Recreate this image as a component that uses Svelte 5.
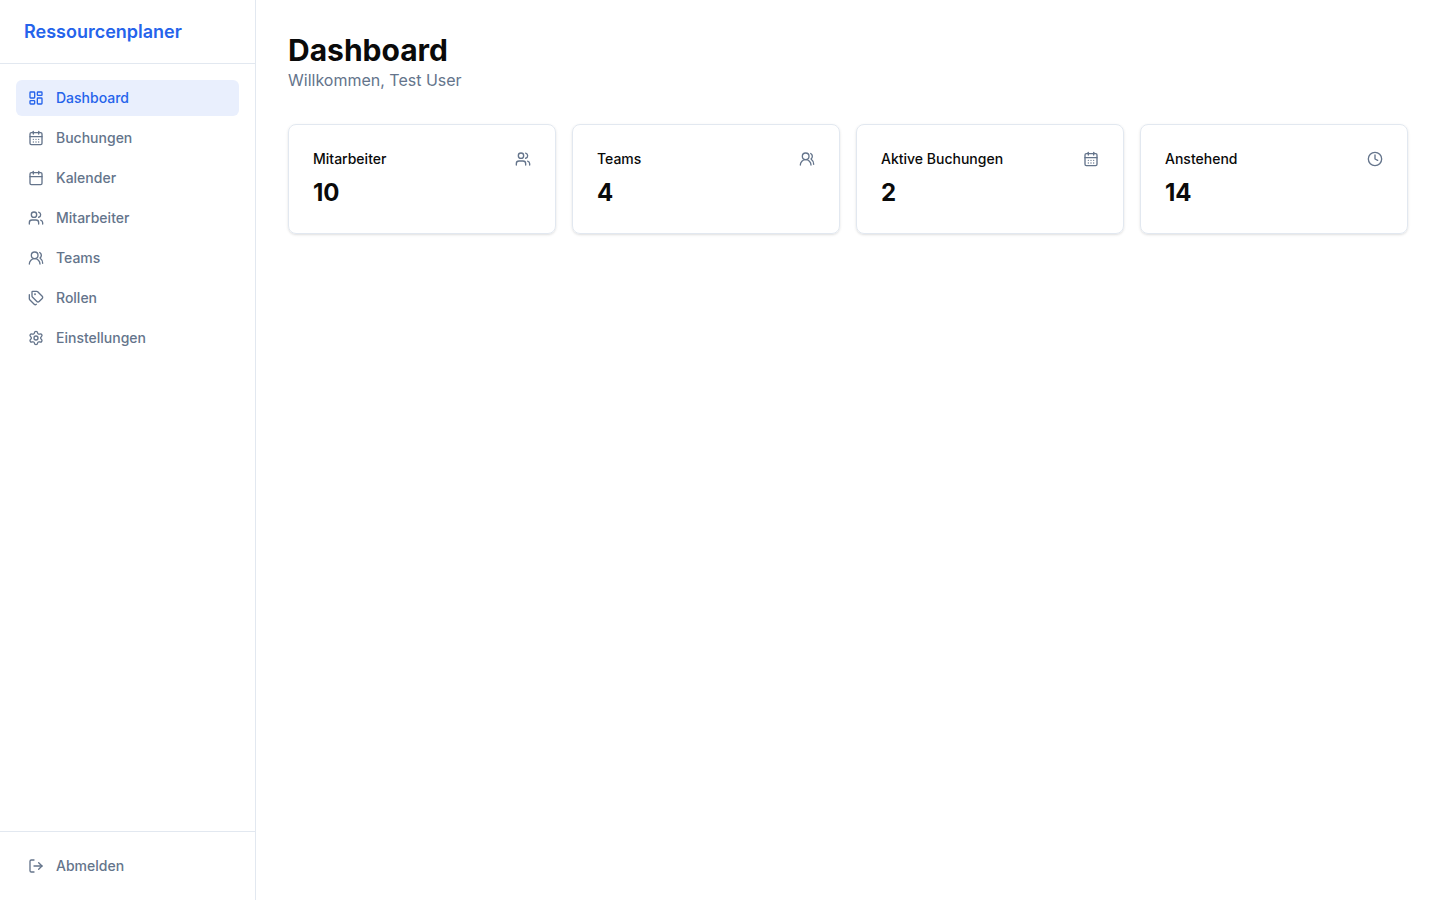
<script>
  const icons = {
    dashboard: `<rect width="7" height="9" x="3" y="3" rx="1"/><rect width="7" height="5" x="14" y="3" rx="1"/><rect width="7" height="9" x="14" y="12" rx="1"/><rect width="7" height="5" x="3" y="16" rx="1"/>`,
    calendarDays: `<path d="M8 2v4"/><path d="M16 2v4"/><rect width="18" height="18" x="3" y="4" rx="2"/><path d="M3 10h18"/><path d="M8 14h.01"/><path d="M12 14h.01"/><path d="M16 14h.01"/><path d="M8 18h.01"/><path d="M12 18h.01"/><path d="M16 18h.01"/>`,
    calendar: `<path d="M8 2v4"/><path d="M16 2v4"/><rect width="18" height="18" x="3" y="4" rx="2"/><path d="M3 10h18"/>`,
    users: `<path d="M16 21v-2a4 4 0 0 0-4-4H6a4 4 0 0 0-4 4v2"/><circle cx="9" cy="7" r="4"/><path d="M22 21v-2a4 4 0 0 0-3-3.87"/><path d="M16 3.128a4 4 0 0 1 0 7.744"/>`,
    usersRound: `<path d="M18 21a8 8 0 0 0-16 0"/><circle cx="10" cy="8" r="5"/><path d="M22 20c0-3.37-2-6.5-4-8a5 5 0 0 0-.45-8.3"/>`,
    tags: `<path d="M13.172 2a2 2 0 0 1 1.414.586l6.71 6.71a2.4 2.4 0 0 1 0 3.408l-4.592 4.592a2.4 2.4 0 0 1-3.408 0l-6.71-6.71A2 2 0 0 1 6 9.172V3a1 1 0 0 1 1-1z"/><path d="M2 7v6.172a2 2 0 0 0 .586 1.414l6.71 6.71a2.4 2.4 0 0 0 3.191.193"/><circle cx="10.5" cy="6.5" r=".5" fill="currentColor"/>`,
    settings: `<path d="M9.671 4.136a2.34 2.34 0 0 1 4.659 0 2.34 2.34 0 0 0 3.319 1.915 2.34 2.34 0 0 1 2.33 4.033 2.34 2.34 0 0 0 0 3.831 2.34 2.34 0 0 1-2.33 4.033 2.34 2.34 0 0 0-3.319 1.915 2.34 2.34 0 0 1-4.659 0 2.34 2.34 0 0 0-3.32-1.915 2.34 2.34 0 0 1-2.33-4.033 2.34 2.34 0 0 0 0-3.831A2.34 2.34 0 0 1 6.35 6.051a2.34 2.34 0 0 0 3.319-1.915"/><circle cx="12" cy="12" r="3"/>`,
    clock: `<circle cx="12" cy="12" r="10"/><path d="M12 6v6l4 2"/>`,
    logout: `<path d="M9 21H5a2 2 0 0 1-2-2V5a2 2 0 0 1 2-2h4"/><path d="m16 17 5-5-5-5"/><path d="M21 12H9"/>`,
  };

  const navItems = [
    { label: "Dashboard", href: "#dashboard", icon: "dashboard" },
    { label: "Buchungen", href: "#buchungen", icon: "calendarDays" },
    { label: "Kalender", href: "#kalender", icon: "calendar" },
    { label: "Mitarbeiter", href: "#mitarbeiter", icon: "users" },
    { label: "Teams", href: "#teams", icon: "usersRound" },
    { label: "Rollen", href: "#rollen", icon: "tags" },
    { label: "Einstellungen", href: "#einstellungen", icon: "settings" },
  ];

  const stats = [
    { title: "Mitarbeiter", value: 10, icon: "users" },
    { title: "Teams", value: 4, icon: "usersRound" },
    { title: "Aktive Buchungen", value: 2, icon: "calendarDays" },
    { title: "Anstehend", value: 14, icon: "clock" },
  ];

  const user = "Test User";
  let active = $state("#dashboard");
</script>

{#snippet icon(name)}
  <svg class="icon" viewBox="0 0 24 24" aria-hidden="true">
    {@html icons[name]}
  </svg>
{/snippet}

<div class="layout">
  <aside class="sidebar">
    <div class="brand">Ressourcenplaner</div>
    <nav>
      {#each navItems as item}
        <a
          href={item.href}
          class="nav-link"
          class:active={active === item.href}
          onclick={() => (active = item.href)}
        >
          {@render icon(item.icon)}
          {item.label}
        </a>
      {/each}
    </nav>
    <div class="sidebar-footer">
      <button class="nav-link" type="button">
        {@render icon("logout")}
        Abmelden
      </button>
    </div>
  </aside>

  <main>
    <h1>Dashboard</h1>
    <p class="welcome">Willkommen, {user}</p>
    <div class="stats">
      {#each stats as stat}
        <section class="card">
          <div class="card-header">
            <h2>{stat.title}</h2>
            {@render icon(stat.icon)}
          </div>
          <div class="value">{stat.value}</div>
        </section>
      {/each}
    </div>
  </main>
</div>

<style>
  :global(body) {
    margin: 0;
    background: #ffffff;
    color: #0a0a0a;
    font-family: Inter, "Liberation Sans", sans-serif;
  }

  .layout,
  .layout * {
    box-sizing: border-box;
  }

  .layout {
    display: flex;
    min-height: 100vh;
  }

  .sidebar {
    display: flex;
    flex-direction: column;
    flex: none;
    width: 256px;
    border-right: 1px solid #e2e8f0;
  }

  .brand {
    display: flex;
    align-items: center;
    height: 64px;
    padding: 0 24px;
    border-bottom: 1px solid #e2e8f0;
    color: #2563eb;
    font-size: 18px;
    font-weight: 600;
  }

  nav {
    display: flex;
    flex: 1;
    flex-direction: column;
    gap: 4px;
    padding: 16px;
  }

  .nav-link {
    display: flex;
    align-items: center;
    gap: 12px;
    width: 100%;
    padding: 8px 12px;
    border: 0;
    border-radius: 6px;
    background: transparent;
    color: #64748b;
    font-family: inherit;
    font-size: 14px;
    font-weight: 500;
    line-height: 20px;
    text-align: left;
    text-decoration: none;
    cursor: pointer;
  }

  .nav-link:hover {
    background: #f1f5f9;
  }

  .nav-link.active {
    background: #e9effd;
    color: #2563eb;
  }

  .sidebar-footer {
    padding: 16px;
    border-top: 1px solid #e2e8f0;
  }

  .icon {
    flex: none;
    width: 16px;
    height: 16px;
    fill: none;
    stroke: currentColor;
    stroke-width: 2;
    stroke-linecap: round;
    stroke-linejoin: round;
  }

  main {
    flex: 1;
    min-width: 0;
    padding: 32px;
  }

  h1 {
    margin: 0;
    font-size: 30px;
    font-weight: 700;
    line-height: 36px;
  }

  .welcome {
    margin: 0 0 32px;
    color: #64748b;
    font-size: 16px;
    line-height: 24px;
  }

  .stats {
    display: grid;
    grid-template-columns: repeat(4, 1fr);
    gap: 16px;
  }

  .card {
    padding: 24px;
    border: 1px solid #e2e8f0;
    border-radius: 8px;
    box-shadow:
      0 1px 3px rgba(0, 0, 0, 0.1),
      0 1px 2px -1px rgba(0, 0, 0, 0.1);
  }

  .card-header {
    display: flex;
    align-items: center;
    justify-content: space-between;
    padding-bottom: 8px;
    color: #64748b;
  }

  h2 {
    margin: 0;
    color: #0a0a0a;
    font-size: 14px;
    font-weight: 500;
    line-height: 20px;
  }

  .value {
    font-size: 24px;
    font-weight: 700;
    line-height: 32px;
  }

  @media (max-width: 1023px) {
    .stats {
      grid-template-columns: repeat(2, 1fr);
    }
  }
</style>
